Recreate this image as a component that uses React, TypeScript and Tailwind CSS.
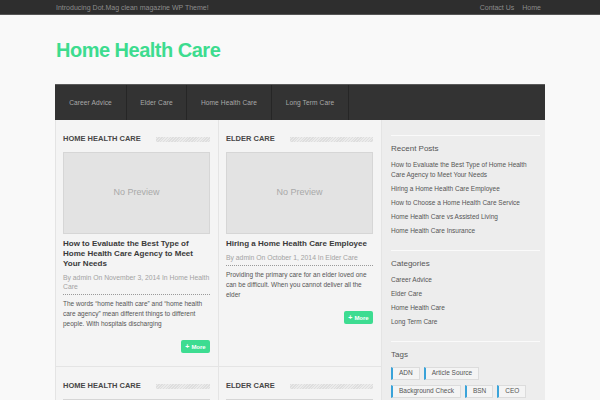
import React from "react";

const hatch =
  "bg-[repeating-linear-gradient(135deg,#dedede_0px,#dedede_1px,#ebebeb_1px,#ebebeb_2px)]";

function Card({
  cat,
  title,
  meta,
  excerpt,
  last,
}: {
  cat: string;
  title: string;
  meta: React.ReactNode;
  excerpt: string;
  last?: boolean;
}) {
  return (
    <div
      className={`bg-[#f4f4f4] border-b border-l border-[#e4e4e4] ${last ? "border-r" : ""} pt-[14px] pb-[13px] pl-[7px] pr-[8px] flex flex-col`}
    >
      <div className="h-[10px] flex items-center">
        <span className="text-[7.5px] font-bold text-[#474747] leading-none whitespace-nowrap">{cat}</span>
        <div className={`flex-1 ml-[15px] h-[5px] ${hatch}`} />
      </div>
      <div className="mt-[8px] h-[82px] bg-[#e3e3e3] border border-[#d6d6d6] flex items-center justify-center">
        <span className="text-[9px] text-[#a9a9a9]">No Preview</span>
      </div>
      <div className="mt-[5px] text-[8px] font-bold leading-[10px] text-[#3a3a3a]">{title}</div>
      <div className="mt-[4px] text-[6.8px] leading-[9px] text-[#a3a3a3]">{meta}</div>
      <div className="mt-[3px] border-t border-dotted border-[#9a9a9a]" />
      <div className="mt-[4px] text-[6.5px] leading-[10px] text-[#555]">{excerpt}</div>
      <div className="mt-[11px] flex justify-end">
        <div className="w-[29px] h-[13px] bg-[#3ddc91] rounded-[2px] flex items-center justify-center text-white text-[6px] font-bold leading-none">
          <span className="text-[7px] mr-[2px]">+</span>More
        </div>
      </div>
    </div>
  );
}

function SmallCard({ cat, last }: { cat: string; last?: boolean }) {
  return (
    <div
      className={`bg-[#f4f4f4] border-l border-[#e4e4e4] ${last ? "border-r" : ""} pt-[14px] pl-[7px] pr-[8px] flex flex-col`}
    >
      <div className="h-[10px] flex items-center">
        <span className="text-[7.5px] font-bold text-[#474747] leading-none whitespace-nowrap">{cat}</span>
        <div className={`flex-1 ml-[15px] h-[5px] ${hatch}`} />
      </div>
      <div className="mt-[8px] h-[82px] bg-[#e3e3e3] border border-[#d6d6d6]" />
    </div>
  );
}

function Widget({ title, children }: { title: string; children: React.ReactNode }) {
  return (
    <div className="border-t border-[#fafafa] pt-[8px] pb-[14px]">
      <div className="text-[8px] leading-[10px] text-[#555]">{title}</div>
      <div className="mt-[6px]">{children}</div>
    </div>
  );
}

export default function App() {
  const recent = [
    "How to Evaluate the Best Type of Home Health Care Agency to Meet Your Needs",
    "Hiring a Home Health Care Employee",
    "How to Choose a Home Health Care Service",
    "Home Health Care vs Assisted Living",
    "Home Health Care Insurance",
  ];
  const cats = ["Career Advice", "Elder Care", "Home Health Care", "Long Term Care"];
  const navs: [string, string][] = [
    ["Career Advice", "w-[72px]"],
    ["Elder Care", "w-[60px]"],
    ["Home Health Care", "w-[85px]"],
    ["Long Term Care", "w-[77px]"],
  ];
  return (
    <div className="w-[600px] h-[400px] overflow-hidden bg-[#f9f9f9] font-['Liberation_Sans',Arial,sans-serif]">
      <div className="h-[15px] bg-[#2e2e2e] border-b border-[#555] flex items-center justify-between pl-[56px] pr-[59px] text-[7px] text-[#8c8c8c] leading-none">
        <span>Introducing Dot.Mag clean magazine WP Theme!</span>
        <div className="flex gap-[8px]">
          <span>Contact Us</span>
          <span>Home</span>
        </div>
      </div>
      <div className="h-[69px] flex items-center pl-[56px]">
        <h1 className="text-[20px] tracking-[-0.5px] font-bold text-[#3ddc8f] leading-none">Home Health Care</h1>
      </div>
      <div className="mx-[55px] w-[490px]">
        <div className="h-[36px] bg-[#333] border-t border-[#5a5a5a] flex">
          {navs.map(([n, w]) => (
            <div
              key={n}
              className={`${w} h-full border-r border-[#262626] flex items-center justify-center text-[6.6px] text-[#a9a9a9] tracking-[0.1px]`}
            >
              {n}
            </div>
          ))}
        </div>
        <div className="flex">
          <div className="w-[327px] flex flex-col">
            <div className="grid grid-cols-[163px_164px]">
              <Card
                cat="HOME HEALTH CARE"
                title="How to Evaluate the Best Type of Home Health Care Agency to Meet Your Needs"
                meta="By admin On November 3, 2014 In Home Health Care"
                excerpt="The words “home health care” and “home health care agency” mean different things to different people. With hospitals discharging"
              />
              <Card
                cat="ELDER CARE"
                title="Hiring a Home Health Care Employee"
                meta="By admin On October 1, 2014 In Elder Care"
                excerpt="Providing the primary care for an elder loved one can be difficult. When you cannot deliver all the elder"
                last
              />
            </div>
            <div className="grid grid-cols-[163px_164px]">
              <SmallCard cat="HOME HEALTH CARE" />
              <SmallCard cat="ELDER CARE" last />
            </div>
          </div>
          <div className="w-[163px] bg-[#ededed] pt-[15px] pl-[9px] pr-[5px] h-[280px]">
            <Widget title="Recent Posts">
              <div className="flex flex-col gap-[4px]">
                {recent.map((r) => (
                  <div key={r} className="text-[6.5px] leading-[10px] text-[#555] pr-[6px]">
                    {r}
                  </div>
                ))}
              </div>
            </Widget>
            <Widget title="Categories">
              <div className="flex flex-col gap-[4px]">
                {cats.map((r) => (
                  <div key={r} className="text-[6.5px] leading-[10px] text-[#555]">
                    {r}
                  </div>
                ))}
              </div>
            </Widget>
            <div className="border-t border-[#fafafa] pt-[8px]">
              <div className="text-[8px] leading-[10px] text-[#555]">Tags</div>
              <div className="mt-[7px] flex flex-wrap gap-x-[4px] gap-y-[5px]">
                {["ADN", "Article Source", "Background Check", "BSN", "CEO"].map((t) => (
                  <div
                    key={t}
                    className="h-[13px] px-[6px] flex items-center bg-[#f4f4f4] border border-[#dcdcdc] border-l-2 border-l-[#3aa3d9] text-[6.5px] text-[#555] leading-none"
                  >
                    {t}
                  </div>
                ))}
              </div>
            </div>
          </div>
        </div>
      </div>
    </div>
  );
}
